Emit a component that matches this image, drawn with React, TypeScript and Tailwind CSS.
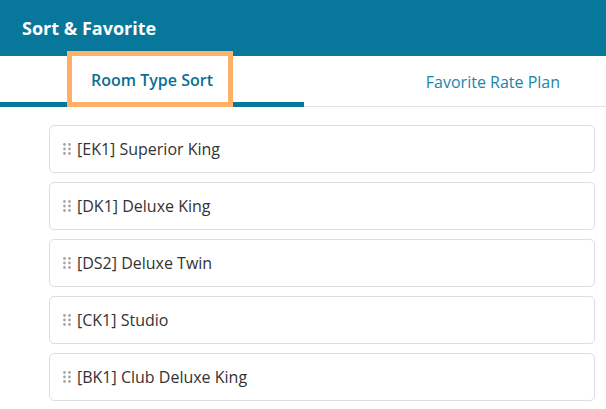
import React from "react";

const items = [
  "[EK1] Superior King",
  "[DK1] Deluxe King",
  "[DS2] Deluxe Twin",
  "[CK1] Studio",
  "[BK1] Club Deluxe King",
];

function Grip() {
  return (
    <svg width="8" height="14" viewBox="0 0 8 14" className="shrink-0">
      {[0, 1, 2].map((r) =>
        [0, 1].map((c) => (
          <circle key={`${r}-${c}`} cx={1.5 + c * 5} cy={2.5 + r * 4.5} r={1.4} fill="#a8a8a8" />
        ))
      )}
    </svg>
  );
}

export default function App() {
  return (
    <div
      className="w-[606px] h-[409px] overflow-hidden bg-white"
      style={{ fontFamily: '"Open Sans", "Liberation Sans", sans-serif' }}
    >
      <div className="h-[56px] bg-[#07779c] flex items-center pl-[22px]">
        <span className="text-white font-bold text-[18px]">Sort &amp; Favorite</span>
      </div>
      <div className="relative flex h-[51px] border-b border-[#e3e3e3]">
        <div className="w-[304px] flex items-center justify-center border-b-[5px] border-[#07779c] -mb-px pt-[2px]">
          <span className="text-[16px] font-semibold text-[#0b6f93]">Room Type Sort</span>
        </div>
        <div className="flex-1 flex items-center justify-end pr-[46px] pt-[2px]">
          <span className="text-[16px] text-[#1b84ab]">Favorite Rate Plan</span>
        </div>
        <div className="absolute left-[67px] top-[-5px] w-[166px] h-[56px] border-[5px] border-[#fdb066]" />
      </div>
      <div className="flex flex-col gap-[9px] pl-[49px] pr-[11px] pt-[18px]">
        {items.map((t) => (
          <div
            key={t}
            className="h-[48px] border border-[#dedede] rounded-[5px] flex items-center gap-[6px] pl-[13px]"
          >
            <Grip />
            <span className="text-[16px] text-[#333333]">{t}</span>
          </div>
        ))}
      </div>
    </div>
  );
}
